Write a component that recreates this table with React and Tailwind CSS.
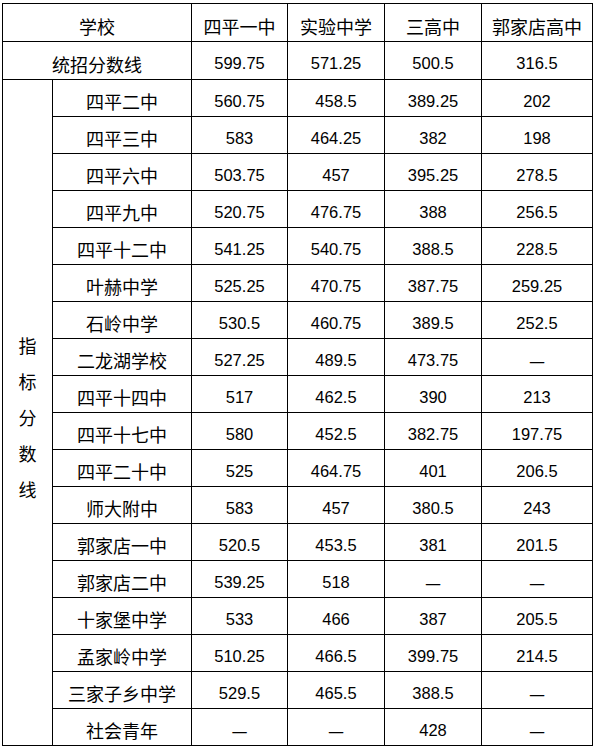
import React from 'react';

const cols = ['四平一中', '实验中学', '三高中', '郭家店高中'];

const rows = [
  ['四平二中', '560.75', '458.5', '389.25', '202'],
  ['四平三中', '583', '464.25', '382', '198'],
  ['四平六中', '503.75', '457', '395.25', '278.5'],
  ['四平九中', '520.75', '476.75', '388', '256.5'],
  ['四平十二中', '541.25', '540.75', '388.5', '228.5'],
  ['叶赫中学', '525.25', '470.75', '387.75', '259.25'],
  ['石岭中学', '530.5', '460.75', '389.5', '252.5'],
  ['二龙湖学校', '527.25', '489.5', '473.75', '—'],
  ['四平十四中', '517', '462.5', '390', '213'],
  ['四平十七中', '580', '452.5', '382.75', '197.75'],
  ['四平二十中', '525', '464.75', '401', '206.5'],
  ['师大附中', '583', '457', '380.5', '243'],
  ['郭家店一中', '520.5', '453.5', '381', '201.5'],
  ['郭家店二中', '539.25', '518', '—', '—'],
  ['十家堡中学', '533', '466', '387', '205.5'],
  ['孟家岭中学', '510.25', '466.5', '399.75', '214.5'],
  ['三家子乡中学', '529.5', '465.5', '388.5', '—'],
  ['社会青年', '—', '—', '428', '—'],
];

const cell = 'border border-black p-0 pt-[6px] text-center align-middle';
const cn = "font-['Noto_Sans_CJK_SC',sans-serif] text-[18px]";
const num = "font-['Liberation_Sans','Noto_Sans_CJK_SC',sans-serif] text-[16.5px]";

const App = () => {
  return (
    <div className="min-h-screen bg-white pl-[2px] pt-[3px] text-black">
      <table className="w-[590px] table-fixed border-collapse leading-none">
        <colgroup>
          <col className="w-[50px]" />
          <col className="w-[139px]" />
          <col className="w-[96px]" />
          <col className="w-[97px]" />
          <col className="w-[97px]" />
          <col className="w-[111px]" />
        </colgroup>
        <tbody>
          <tr className="h-[38px]">
            <td colSpan={2} className={`${cell} ${cn}`}>学校</td>
            {cols.map((c) => (
              <td key={c} className={`${cell} ${cn}`}>{c}</td>
            ))}
          </tr>
          <tr className="h-[38px]">
            <td colSpan={2} className={`${cell} ${cn}`}>统招分数线</td>
            <td className={`${cell} ${num}`}>599.75</td>
            <td className={`${cell} ${num}`}>571.25</td>
            <td className={`${cell} ${num}`}>500.5</td>
            <td className={`${cell} ${num}`}>316.5</td>
          </tr>
          {rows.map((r, i) => (
            <tr key={r[0]} className="h-[37px]">
              {i === 0 && (
                <td rowSpan={rows.length} className={`${cell} ${cn}`}>
                  <div className="flex flex-col items-center pt-[2px] leading-[36px]">
                    {'指标分数线'.split('').map((ch) => (
                      <span key={ch}>{ch}</span>
                    ))}
                  </div>
                </td>
              )}
              <td className={`${cell} ${cn}`}>{r[0]}</td>
              {r.slice(1).map((v, j) => (
                <td key={j} className={`${cell} ${v === '—' ? cn : num}`}>{v}</td>
              ))}
            </tr>
          ))}
        </tbody>
      </table>
    </div>
  );
};

export default App;
